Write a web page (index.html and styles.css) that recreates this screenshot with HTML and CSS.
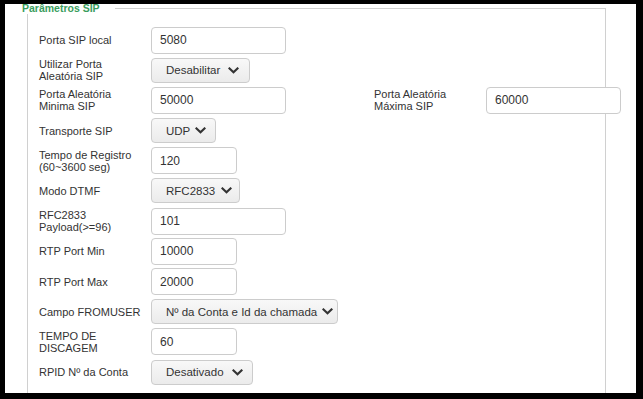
FILE: index.html
```html
<!DOCTYPE html>
<html lang="pt">
<head>
    <meta charset="UTF-8">
    <title>Parâmetros SIP</title>
    <link rel="stylesheet" href="styles.css">
</head>
<body>
    <div class="frame">
        <div class="group">
            <div class="group-title">Parâmetros SIP</div>

            <div class="row">
                <div class="field">
                    <label class="label">Porta SIP local</label>
                    <input class="input wide" type="text" value="5080">
                </div>
            </div>

            <div class="row">
                <div class="field">
                    <label class="label">Utilizar Porta Aleatória SIP</label>
                    <div class="select sel-random">Desabilitar <svg class="chev" width="11" height="7" viewBox="0 0 11 7"><polyline points="1.5,1.5 5.5,5.2 9.5,1.5"/></svg></div>
                </div>
            </div>

            <div class="row">
                <div class="field half">
                    <label class="label">Porta Aleatória Minima SIP</label>
                    <input class="input wide" type="text" value="50000">
                </div>
                <div class="field">
                    <label class="label">Porta Aleatória Máxima SIP</label>
                    <input class="input wide" type="text" value="60000">
                </div>
            </div>

            <div class="row">
                <div class="field">
                    <label class="label">Transporte SIP</label>
                    <div class="select sel-transport">UDP <svg class="chev" width="11" height="7" viewBox="0 0 11 7"><polyline points="1.5,1.5 5.5,5.2 9.5,1.5"/></svg></div>
                </div>
            </div>

            <div class="row">
                <div class="field">
                    <label class="label">Tempo de Registro (60~3600 seg)</label>
                    <input class="input short" type="text" value="120">
                </div>
            </div>

            <div class="row">
                <div class="field">
                    <label class="label">Modo DTMF</label>
                    <div class="select sel-dtmf">RFC2833 <svg class="chev" width="11" height="7" viewBox="0 0 11 7"><polyline points="1.5,1.5 5.5,5.2 9.5,1.5"/></svg></div>
                </div>
            </div>

            <div class="row">
                <div class="field">
                    <label class="label">RFC2833 Payload(&gt;=96)</label>
                    <input class="input wide" type="text" value="101">
                </div>
            </div>

            <div class="row">
                <div class="field">
                    <label class="label">RTP Port Min</label>
                    <input class="input short" type="text" value="10000">
                </div>
            </div>

            <div class="row">
                <div class="field">
                    <label class="label">RTP Port Max</label>
                    <input class="input short" type="text" value="20000">
                </div>
            </div>

            <div class="row">
                <div class="field">
                    <label class="label">Campo FROMUSER</label>
                    <div class="select sel-fromuser">Nº da Conta e Id da chamada <svg class="chev" width="11" height="7" viewBox="0 0 11 7"><polyline points="1.5,1.5 5.5,5.2 9.5,1.5"/></svg></div>
                </div>
            </div>

            <div class="row">
                <div class="field">
                    <label class="label">TEMPO DE DISCAGEM</label>
                    <input class="input short" type="text" value="60">
                </div>
            </div>

            <div class="row">
                <div class="field">
                    <label class="label">RPID Nº da Conta</label>
                    <div class="select sel-rpid">Desativado <svg class="chev" width="11" height="7" viewBox="0 0 11 7"><polyline points="1.5,1.5 5.5,5.2 9.5,1.5"/></svg></div>
                </div>
            </div>
        </div>
    </div>
</body>
</html>
```

FILE: styles.css
```css
html, body {
    margin: 0;
    padding: 0;
    background-color: #000;
}
body {
    font-family: "Liberation Sans", Arial, sans-serif;
    color: #333;
    padding: 4px 7px 6px 5px;
}
.frame {
    background-color: #fff;
    height: 389px;
    overflow: hidden;
}
.group {
    position: relative;
    margin: 4px 30px 0 22px;
    border: 1px solid #d0d0d0;
    border-bottom: none;
    padding: 16px 0 40px 11px;
}
/* legend sits half under the top edge of the frame, as in the app */
.group-title {
    position: absolute;
    top: -6px;
    left: -12px;
    background-color: #fff;
    padding: 0 15px 0 6px;
    font-size: 10.5px;
    line-height: 11px;
    font-weight: bold;
    color: #3a9d5d;
}
.row {
    display: flex;
    align-items: center;
    height: 30px;
    margin-bottom: 0.2px;
}
.field {
    display: flex;
    align-items: center;
    flex-shrink: 0;
}
.field.half {
    width: 335px;
}
.label {
    width: 105px;
    margin-right: 7px;
    flex-shrink: 0;
    font-size: 11px;
    color: #333;
}
.input {
    box-sizing: border-box;
    height: 27px;
    border: 1px solid #ccc;
    border-radius: 4px;
    padding: 0 8px;
    font-family: "Liberation Sans", Arial, sans-serif;
    font-size: 12px;
    color: #333;
    background-color: #fff;
    margin: 0;
}
.input.wide {
    width: 135px;
}
.input.short {
    width: 86px;
}
.select {
    box-sizing: border-box;
    height: 25px;
    display: flex;
    align-items: center;
    gap: 6px;
    padding: 0 0 0 14px;
    border: 1px solid #ccc;
    border-radius: 4px;
    background: linear-gradient(#f8f8f8, #ebebeb);
    font-size: 11.5px;
    color: #333;
    white-space: nowrap;
}
.sel-random {
    width: 99px;
    gap: 8px;
}
.sel-transport {
    width: 65px;
    gap: 5px;
}
.sel-dtmf {
    width: 89px;
    gap: 6px;
}
.sel-fromuser {
    width: 187px;
    gap: 5px;
}
.sel-rpid {
    width: 102px;
    gap: 8px;
}
.chev polyline {
    fill: none;
    stroke: #333;
    stroke-width: 2.2;
    stroke-linecap: square;
}
```
